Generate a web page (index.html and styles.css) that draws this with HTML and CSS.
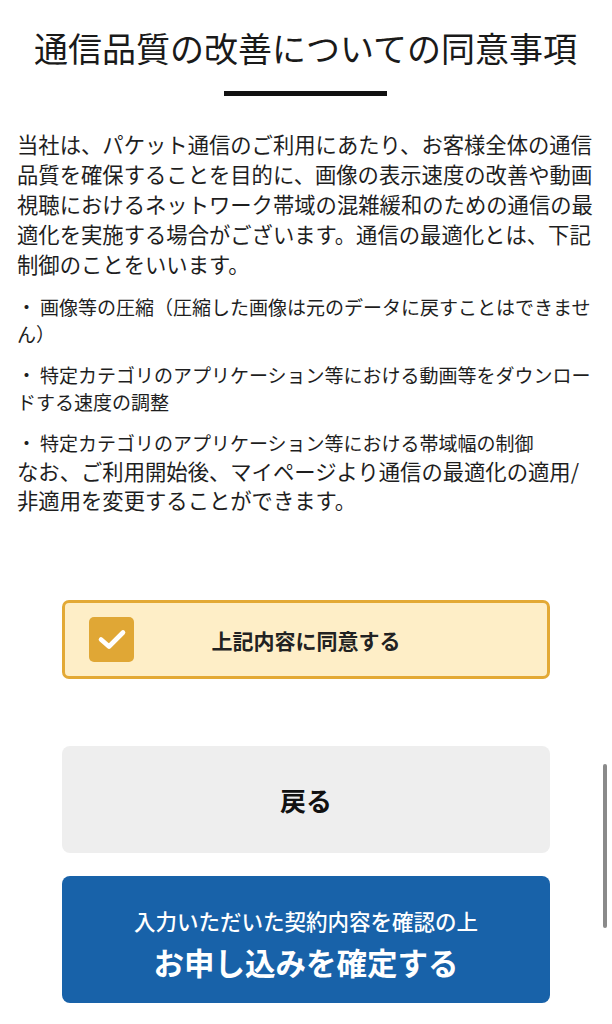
FILE: index.html
```html
<html lang="ja">
  <head>
    <meta charset="UTF-8" />
    <meta name="viewport" content="width=device-width, initial-scale=1.0" />
    <title>通信品質の改善についての同意事項</title>
    <link rel="stylesheet" href="styles.css">
  </head>
  <body>
    <div class="page">
      <h1 class="title">通信品質の改善についての同意事項</h1>
      <div class="title-bar"></div>

      <p class="lead">当社は、パケット通信のご利用にあたり、お客様全体の通信品質を確保することを目的に、画像の表示速度の改善や動画視聴におけるネットワーク帯域の混雑緩和のための通信の最適化を実施する場合がございます。通信の最適化とは、下記制御のことをいいます。</p>

      <ul class="notes">
        <li>画像等の圧縮（圧縮した画像は元のデータに戻すことはできませ<br>ん）</li>
        <li>特定カテゴリのアプリケーション等における動画等をダウンロー<br>ドする速度の調整</li>
        <li>特定カテゴリのアプリケーション等における帯域幅の制御</li>
      </ul>

      <p class="tail">なお、ご利用開始後、マイページより通信の最適化の適用/非適用を変更することができます。</p>

      <div class="actions">
        <label class="agree">
          <span class="agree-box">
            <svg width="45" height="45" viewBox="0 0 45 45">
              <path d="M12 22.5 L20 29.5 L34 15.5" fill="none" stroke="#fff" stroke-width="4.6" stroke-linecap="round" stroke-linejoin="round" />
            </svg>
          </span>
          <span class="agree-text">上記内容に同意する</span>
        </label>

        <button class="btn btn-back">戻る</button>

        <button class="btn btn-submit">
          <span class="submit-sub">入力いただいた契約内容を確認の上</span>
          <span class="submit-main">お申し込みを確定する</span>
        </button>
      </div>
    </div>

    <div class="scroll-thumb"></div>
  </body>
</html>
```

FILE: styles.css
```css
body {
  background-color: #fff;
  color: #1e1e1e;
  font-family: "Noto Sans CJK JP", "Noto Sans", sans-serif;
  margin: 0;
  text-spacing-trim: space-all;
}

.page {
  padding: 26px 18px 0 17px;
}

.title {
  font-size: 34px;
  font-weight: 400;
  line-height: 44px;
  margin: 0;
  text-align: center;
  color: #1a1a1a;
}

.title-bar {
  background-color: #111;
  height: 5px;
  margin: 21px auto 0;
  width: 163px;
}

.lead,
.tail {
  font-size: 21.33px;
  line-height: 30px;
  margin: 0;
}

.lead {
  margin-top: 33px;
}

.notes {
  list-style: none;
  margin: 0;
  padding: 0;
}

.notes li {
  font-size: 19px;
  line-height: 27px;
  margin-top: 14px;
}

.notes li::before {
  content: "・";
  display: inline-block;
  width: 23px;
}

.tail {
  line-height: 29px;
}

.actions {
  display: flex;
  flex-direction: column;
  margin-top: 86px;
  padding: 0 44px 0 45px;
}

.agree {
  align-items: center;
  background-color: #feeec7;
  border: 3px solid #e3a935;
  border-radius: 7px;
  box-sizing: border-box;
  display: grid;
  grid-template-columns: 45px 1fr 45px;
  height: 79px;
  padding: 0 24px;
}

.agree-box {
  background-color: #e0a735;
  border-radius: 5px;
  display: block;
  height: 45px;
  width: 45px;
}

.agree-box svg {
  display: block;
}

.agree-text {
  font-size: 21px;
  font-weight: 700;
  text-align: center;
  color: #222;
}

.btn {
  border: none;
  border-radius: 8px;
  font-family: inherit;
  text-align: center;
  width: 100%;
}

.btn-back {
  background-color: #eeeeee;
  color: #111;
  font-size: 26px;
  font-weight: 700;
  height: 107px;
  margin-top: 67px;
}

.btn-submit {
  background-color: #1862a9;
  color: #fff;
  display: flex;
  flex-direction: column;
  align-items: center;
  justify-content: center;
  height: 127px;
  margin-top: 23px;
  padding-top: 12px;
}

.submit-sub {
  font-size: 21.5px;
  font-weight: 500;
  line-height: 30px;
}

.submit-main {
  font-size: 30.5px;
  font-weight: 700;
  line-height: 44px;
  margin-top: 4px;
}

.scroll-thumb {
  background-color: #8a8a8a;
  border-radius: 2px;
  height: 164px;
  position: absolute;
  right: 5px;
  top: 764px;
  width: 4px;
}
```
